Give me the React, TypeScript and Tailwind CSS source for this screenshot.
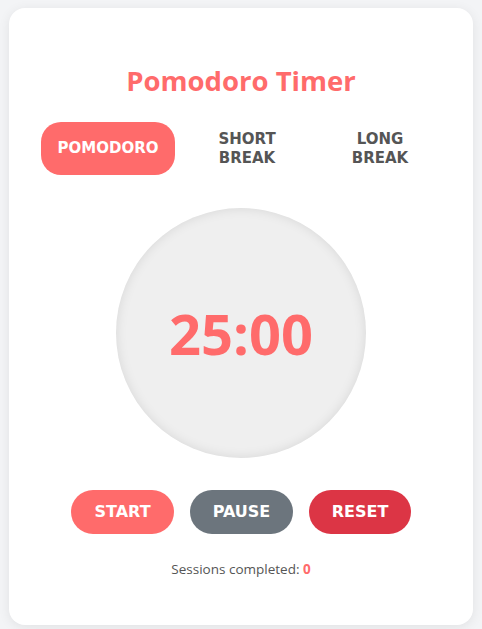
import { useState } from 'react';

type Mode = 'pomodoro' | 'short' | 'long';

const modes: { id: Mode; label: string; minutes: number; width: string }[] = [
  { id: 'pomodoro', label: 'POMODORO', minutes: 25, width: 'w-[134px]' },
  { id: 'short', label: 'SHORT BREAK', minutes: 5, width: 'w-[122px]' },
  { id: 'long', label: 'LONG BREAK', minutes: 15, width: 'w-[122px]' },
];

export default function App() {
  const [mode, setMode] = useState<Mode>('pomodoro');
  const [sessions] = useState(0);

  const current = modes.find((m) => m.id === mode)!;
  const time = `${String(current.minutes).padStart(2, '0')}:00`;

  return (
    <div className="min-h-[629px] bg-[#f3f4f6] px-[9px] pt-[8px] pb-[4px]">
      <div className="flex w-[464px] flex-col items-center rounded-2xl bg-white px-8 pt-[57px] pb-[46px] shadow-[0_2px_12px_rgba(0,0,0,0.08)]">
        <h1 className="font-['Open_Sans',sans-serif] text-[27.5px] leading-[32px] font-bold text-[#ff6b6b]">
          Pomodoro Timer
        </h1>

        {/* mode tabs */}
        <div className="mt-[25px] flex w-full gap-[11px]">
          {modes.map((m) => (
            <button
              key={m.id}
              onClick={() => setMode(m.id)}
              className={`h-[53px] ${m.width} rounded-[20px] px-2 font-['DejaVu_Sans',sans-serif] text-[15px] leading-[19px] font-bold ${
                mode === m.id ? 'bg-[#ff6b6b] text-white' : 'bg-transparent text-[#555]'
              }`}
            >
              {m.label}
            </button>
          ))}
        </div>

        {/* timer */}
        <div className="mt-[33px] flex h-[250px] w-[250px] items-center justify-center rounded-full bg-[#efefef] shadow-[inset_0_0_12px_rgba(0,0,0,0.1)]">
          <span className="font-['Open_Sans',sans-serif] text-[56px] leading-none font-bold text-[#ff6b6b]">
            {time}
          </span>
        </div>

        {/* controls */}
        <div className="mt-[32px] flex gap-4">
          <button className="h-[44px] w-[103px] rounded-full bg-[#ff6b6b] font-['DejaVu_Sans',sans-serif] text-[16px] font-bold text-white">
            START
          </button>
          <button className="h-[44px] w-[103px] rounded-full bg-[#6c757d] font-['DejaVu_Sans',sans-serif] text-[16px] font-bold text-white">
            PAUSE
          </button>
          <button className="h-[44px] w-[102px] rounded-full bg-[#dc3545] font-['DejaVu_Sans',sans-serif] text-[16px] font-bold text-white">
            RESET
          </button>
        </div>

        <p className="mt-[25px] font-['Open_Sans',sans-serif] text-[13.5px] leading-[20px] text-[#555]">
          Sessions completed: <span className="font-bold text-[#ff6b6b]">{sessions}</span>
        </p>
      </div>
    </div>
  );
}
